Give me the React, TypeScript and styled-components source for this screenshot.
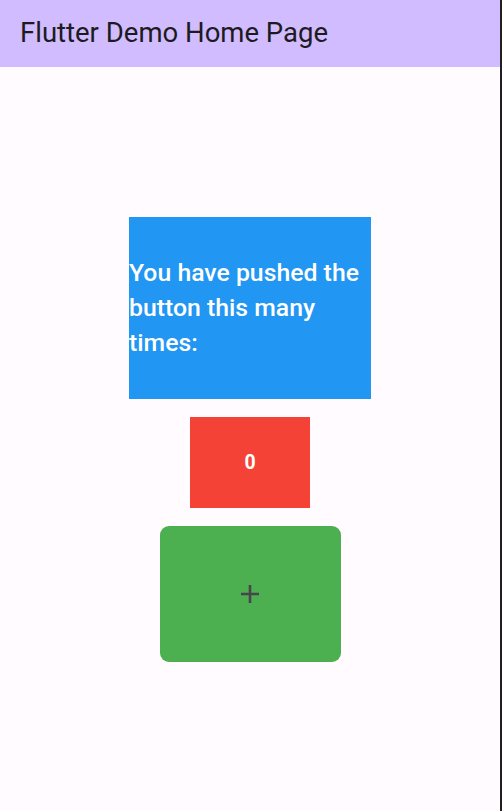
import React, { useState } from "react";
import styled, { createGlobalStyle } from "styled-components";

const GlobalStyle = createGlobalStyle`
  html, body {
    margin: 0;
    padding: 0;
    background: #1f1f22;
  }
  body {
    font-family: Roboto, "Noto Sans", sans-serif;
  }
`;

const Screen = styled.div`
  width: 500px;
  height: 811px;
  background: #fffbfe;
  display: flex;
  flex-direction: column;
  border-right: 2px solid #1f1f22;
`;

const AppBar = styled.header`
  height: 67px;
  box-sizing: border-box;
  flex-shrink: 0;
  background: #d0bcff;
  display: flex;
  align-items: center;
  padding: 0 0 3px 20px;
`;

const Title = styled.h1`
  margin: 0;
  font-family: Roboto, sans-serif;
  font-weight: 400;
  font-size: 27.5px;
  color: #1d1b20;
  letter-spacing: 0;
`;

const Body = styled.main`
  flex: 1;
  display: flex;
  flex-direction: column;
  align-items: center;
  justify-content: center;
  gap: 18px;
`;

const Block = styled.div<{ $bg: string; $w: number; $h: number; $radius?: number }>`
  width: ${(p) => p.$w}px;
  height: ${(p) => p.$h}px;
  background: ${(p) => p.$bg};
  border-radius: ${(p) => p.$radius || 0}px;
  display: flex;
  align-items: center;
`;

const Message = styled.p`
  margin: 0;
  color: #fff;
  font-family: Roboto, sans-serif;
  font-weight: 500;
  font-size: 24.8px;
  line-height: 35px;
`;

const Count = styled.span`
  width: 100%;
  text-align: center;
  color: #fff;
  font-family: Roboto, sans-serif;
  font-weight: 700;
  font-size: 19.5px;
`;

const PlusButton = styled.button`
  width: 100%;
  height: 100%;
  border: none;
  background: transparent;
  display: flex;
  align-items: center;
  justify-content: center;
  cursor: pointer;
  padding: 0;
`;

export default function App() {
  const [count, setCount] = useState(0);
  return (
    <>
      <GlobalStyle />
      <Screen>
        <AppBar>
          <Title>Flutter Demo Home Page</Title>
        </AppBar>
        <Body>
          <Block $bg="#2196f3" $w={242} $h={182}>
            <Message>You have pushed the button this many times:</Message>
          </Block>
          <Block $bg="#f44336" $w={120} $h={91}>
            <Count>{count}</Count>
          </Block>
          <Block $bg="#4caf50" $w={181} $h={136} $radius={9}>
            <PlusButton onClick={() => setCount(count + 1)} aria-label="Increment">
              <svg width="18" height="18" viewBox="0 0 18 18">
                <path d="M9 0v18M0 9h18" stroke="#49454f" strokeWidth="2.6" />
              </svg>
            </PlusButton>
          </Block>
        </Body>
      </Screen>
    </>
  );
}
